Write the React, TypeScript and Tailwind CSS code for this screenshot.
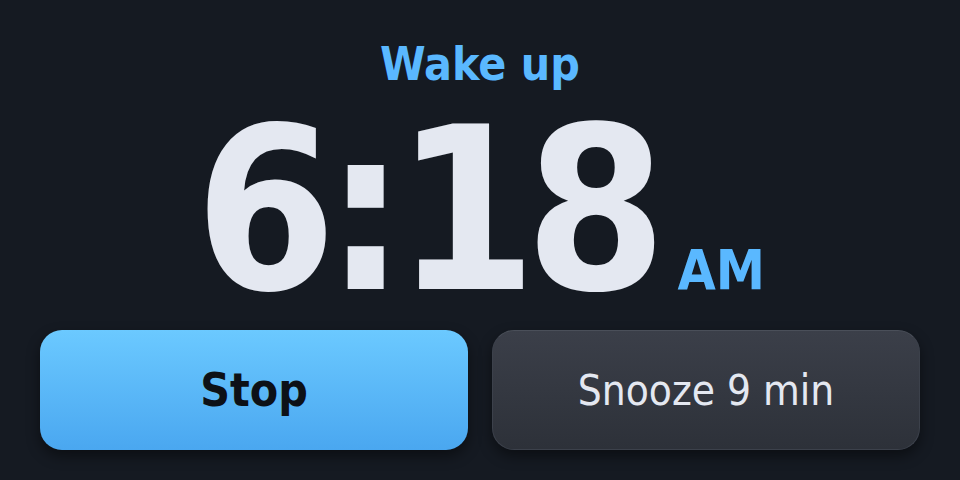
import React from "react";

const face = {
  fontFamily: '"DejaVu Sans Condensed", "DejaVu Sans", sans-serif',
  fontStretch: "condensed",
} as const;

export default function App() {
  return (
    <div
      className="w-[960px] h-[480px] bg-[#151a22] flex flex-col items-center px-10 pt-[41px] pb-[30px]"
      style={face}
    >
      <div className="text-[46px] leading-none font-bold text-[#5ab8ff]">Wake up</div>
      <div className="mt-[34px] flex items-baseline text-[#e4e8f1]">
        <span className="text-[226px] leading-[0.8] font-bold tracking-[-0.05em]">6:18</span>
        <span className="ml-[22px] text-[55px] leading-none font-bold text-[#5ab8ff]">AM</span>
      </div>
      <div className="mt-auto grid grid-cols-2 gap-6 w-full">
        <button className="h-[120px] rounded-[22px] bg-gradient-to-b from-[#6bc9ff] to-[#4aa7f0] text-[#0d1117] text-[46px] font-bold shadow-[0_6px_14px_rgba(0,0,0,0.45)]">
          Stop
        </button>
        <button className="h-[120px] rounded-[22px] bg-gradient-to-b from-[#3b3f49] to-[#2d3139] border border-[#3c414b] border-t-[#4a4f59] text-[#e4e8f1] text-[42px] shadow-[0_6px_14px_rgba(0,0,0,0.45)]">
          Snooze 9 min
        </button>
      </div>
    </div>
  );
}
